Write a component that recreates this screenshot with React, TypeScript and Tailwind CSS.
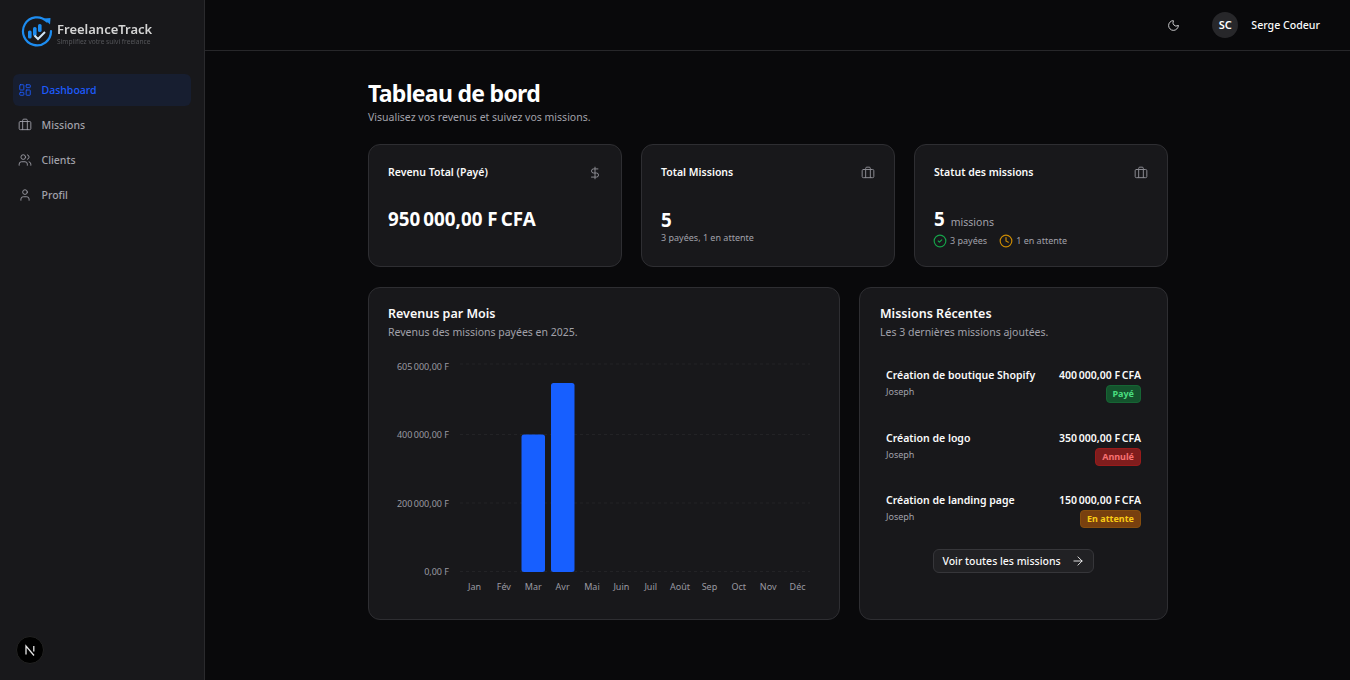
import React from 'react';
import { ArrowRight, Briefcase, CircleCheck, Clock, DollarSign, LayoutDashboard, Moon, User, Users } from 'lucide-react';

const navItems = [
  { label: 'Dashboard', icon: LayoutDashboard, active: true },
  { label: 'Missions', icon: Briefcase, active: false },
  { label: 'Clients', icon: Users, active: false },
  { label: 'Profil', icon: User, active: false },
];

const months = ['Jan', 'Fév', 'Mar', 'Avr', 'Mai', 'Juin', 'Juil', 'Août', 'Sep', 'Oct', 'Nov', 'Déc'];

const yTicks = [
  { label: '605\u202f000,00 F', y: 364, textY: 370 },
  { label: '400\u202f000,00 F', y: 434.5, textY: 437.5 },
  { label: '200\u202f000,00 F', y: 503, textY: 506.5 },
  { label: '0,00 F', y: 571.5, textY: 574.5 },
];

const recentMissions = [
  { title: 'Création de boutique Shopify', amount: '400\u202f000,00 F\u202fCFA', status: 'Payé', badge: 'bg-[#14532d] border-[#166534] text-[#4ade80]' },
  { title: 'Création de logo', amount: '350\u202f000,00 F\u202fCFA', status: 'Annulé', badge: 'bg-[#7f1d1d] border-[#991b1b] text-[#f87171]' },
  { title: 'Création de landing page', amount: '150\u202f000,00 F\u202fCFA', status: 'En attente', badge: 'bg-[#78400f] border-[#854d0e] text-[#facc15]' },
];

const Logo = () => (
  <div className="flex items-center gap-[4px] h-[50px] pl-[21px] pt-[12px] blur-[0.3px]">
    <svg width="32" height="32" viewBox="0 0 32 32" fill="none">
      <path d="M26 6.5A14 14 0 1 0 30 16" stroke="#1d8cf0" strokeWidth="2.2" strokeLinecap="round" />
      <path d="M23 3.5l6.5-.5-.5 6.5z" fill="#1d8cf0" />
      <rect x="7" y="15.5" width="3.6" height="8" rx="1.6" fill="#1d8cf0" />
      <rect x="12" y="12" width="3.6" height="9" rx="1.6" fill="#1d8cf0" />
      <rect x="17" y="9" width="3.6" height="8" rx="1.6" fill="#1d8cf0" />
      <path d="M13.5 20.5l3.5 3.5 7-7" stroke="#d0e4f5" strokeWidth="2" />
    </svg>
    <div className="flex flex-col pt-[5px]">
      <span className="text-[13px] leading-[16px] font-semibold text-[#d4d4d4]">FreelanceTrack</span>
      <span className="text-[6.6px] leading-[9px] text-[#55565a]">Simplifiez votre suivi freelance</span>
    </div>
  </div>
);

const Sidebar = () => (
  <aside className="flex flex-col w-[205px] shrink-0 h-full bg-[#18181b] border-r border-[#2a2a2d]">
    <Logo />
    <nav className="flex flex-col gap-[3px] px-[13px] pt-[24px]">
      {navItems.map((item) => (
        <div
          key={item.label}
          className={`flex items-center gap-[9.5px] h-[32px] px-[5px] rounded-md text-[10.5px] font-medium ${
            item.active ? 'bg-[#171e30] text-[#1d5cff]' : 'text-[#a1a1aa]'
          }`}
        >
          <item.icon size={14} strokeWidth={1.5} />
          <span className="pt-[2px]">{item.label}</span>
        </div>
      ))}
    </nav>
    <div className="mt-auto pl-[16px] pb-[16px]">
      <div className="flex items-center justify-center w-[28px] h-[28px] rounded-full bg-black border border-[#222]">
        <svg width="12" height="12" viewBox="0 0 12 12" fill="none">
          <path d="M2 10.5V2l8 9.5M9.8 2v5.5" stroke="#e5e5e5" strokeWidth="1.3" />
        </svg>
      </div>
    </div>
  </aside>
);

const Header = () => (
  <header className="flex items-center justify-end gap-[13px] h-[51px] shrink-0 pr-[30px] border-b border-[#27272a]">
    <Moon size={13} strokeWidth={1.6} className="text-[#e4e4e7] mr-[19px]" />
    <div className="flex items-center justify-center w-[26px] h-[26px] rounded-full bg-[#27272a] text-[11px] font-semibold text-white">SC</div>
    <span className="mt-[1px] text-[10.6px] font-medium text-[#fafafa]">Serge Codeur</span>
  </header>
);

const Card = ({ className, children }: { className: string; children: React.ReactNode }) => (
  <div className={`bg-[#18181b] border border-[#2e2e32] rounded-xl ${className}`}>{children}</div>
);

const StatCard = ({ title, icon, children }: { title: string; icon: React.ReactNode; children: React.ReactNode }) => (
  <Card className="flex flex-col w-[254px] h-[123px] px-[19px] pt-[21px]">
    <div className="flex items-center justify-between h-[14px] text-[#8b8b92]">
      <span className="text-[10.5px] font-semibold text-[#fafafa]">{title}</span>
      {icon}
    </div>
    {children}
  </Card>
);

const RevenueChart = () => (
  <svg width="432" height="236" viewBox="388 358 432 236" className="mt-[18px]">
    {yTicks.map((tick) => (
      <g key={tick.y}>
        <line x1="460" x2="810" y1={tick.y} y2={tick.y} stroke="#232326" strokeDasharray="3 3" />
        <text x="449" y={tick.textY} textAnchor="end" fontSize="9" fill="#9a9aa2">{tick.label}</text>
      </g>
    ))}
    <rect x="521.5" y="434.5" width="23.5" height="137.5" rx="2.5" fill="#175fff" />
    <rect x="551" y="383" width="23.5" height="189" rx="2.5" fill="#175fff" />
    {months.map((month, i) => (
      <text key={month} x={474.5 + i * 29.37} y="590" textAnchor="middle" fontSize="9" fill="#9a9aa2">{month}</text>
    ))}
  </svg>
);

export default function App() {
  return (
    <div className="flex w-[1350px] h-[680px] overflow-hidden bg-[#09090b] text-white font-['Noto_Sans',sans-serif]">
      <Sidebar />
      <div className="flex flex-col flex-1 min-w-0">
        <Header />
        <main className="pl-[163px] pt-[28px] w-[963px]">
          <h1 className="text-[23px] leading-[28px] font-bold text-white tracking-[-0.7px]">Tableau de bord</h1>
          <p className="mt-[2px] text-[10.5px] leading-[16px] text-[#a1a1aa]">Visualisez vos revenus et suivez vos missions.</p>

          <div className="flex gap-[19px] mt-[19px]">
            <StatCard title="Revenu Total (Payé)" icon={<DollarSign size={14} strokeWidth={1.7} />}>
              <div className="mt-[25px] text-[18.8px] leading-[28px] font-bold text-white">950{'\u202f'}000,00 F{'\u202f'}CFA</div>
            </StatCard>
            <StatCard title="Total Missions" icon={<Briefcase size={14} strokeWidth={1.7} />}>
              <div className="mt-[28px] text-[18.8px] leading-[24px] font-bold text-white">5</div>
              <div className="-mt-[1px] text-[9px] leading-[14px] text-[#a1a1aa]">3 payées, 1 en attente</div>
            </StatCard>
            <StatCard title="Statut des missions" icon={<Briefcase size={14} strokeWidth={1.7} />}>
              <div className="flex items-baseline gap-[6px] mt-[27px]">
                <span className="text-[18.8px] leading-[24px] font-bold text-white">5</span>
                <span className="text-[10.5px] text-[#a1a1aa]">missions</span>
              </div>
              <div className="flex items-center gap-[12px] mt-[3px] -ml-[1px] text-[9px] leading-[14px] text-[#a1a1aa]">
                <span className="flex items-center gap-[3px]"><CircleCheck size={14} strokeWidth={2} className="text-[#16a34a]" />3 payées</span>
                <span className="flex items-center gap-[3px]"><Clock size={14} strokeWidth={2} className="text-[#ca8a04]" />1 en attente</span>
              </div>
            </StatCard>
          </div>

          <div className="flex gap-[19px] mt-[20px]">
            <Card className="w-[472px] h-[333px] px-[19px] pt-[18px]">
              <h2 className="text-[12.5px] leading-[16px] font-semibold text-[#fafafa]">Revenus par Mois</h2>
              <p className="mt-[2px] text-[10.5px] leading-[16px] text-[#a1a1aa]">Revenus des missions payées en 2025.</p>
              <RevenueChart />
            </Card>
            <Card className="flex flex-col w-[309px] h-[333px] px-[20px] pt-[18px]">
              <h2 className="text-[12.5px] leading-[16px] font-semibold text-[#fafafa]">Missions Récentes</h2>
              <p className="mt-[2px] text-[10.5px] leading-[16px] text-[#a1a1aa]">Les 3 dernières missions ajoutées.</p>
              <div className="flex flex-col gap-[18.5px] mt-[28px] px-[6px]">
                {recentMissions.map((mission) => (
                  <div key={mission.title} className="flex justify-between h-[44px]">
                    <div className="flex flex-col">
                      <span className="text-[10.5px] leading-[14px] font-semibold text-[#fafafa]">{mission.title}</span>
                      <span className="mt-[3px] text-[9px] leading-[14px] text-[#a1a1aa]">Joseph</span>
                    </div>
                    <div className="flex flex-col items-end">
                      <span className="text-[10.5px] leading-[14px] font-semibold text-[#fafafa]">{mission.amount}</span>
                      <span className={`mt-[3px] px-[6px] h-[18px] flex items-center rounded-[4px] border text-[9px] font-bold ${mission.badge}`}>{mission.status}</span>
                    </div>
                  </div>
                ))}
              </div>
              <div className="flex justify-center mt-[12px]">
                <div className="flex items-center gap-[10px] h-[24px] px-[8px] rounded-md bg-[#212124] border border-[#36363a] text-[10.5px] font-medium text-[#fafafa]">
                  <span className="pt-[1px]">Voir toutes les missions</span>
                  <ArrowRight size={14} strokeWidth={1.5} />
                </div>
              </div>
            </Card>
          </div>
        </main>
      </div>
    </div>
  );
}
